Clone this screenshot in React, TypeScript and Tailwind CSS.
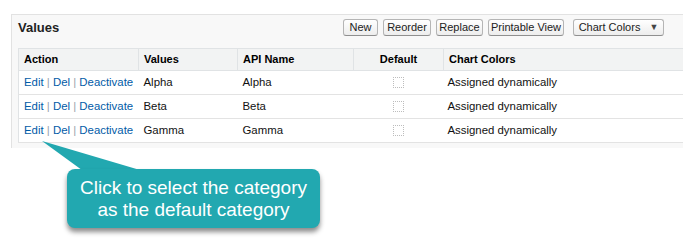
import React from 'react';

const rows = ['Alpha', 'Beta', 'Gamma'];

function Btn({ label, width, caret }: { label: string; width: string; caret?: boolean }) {
  return (
    <button
      type="button"
      className={`${width} h-[17px] flex items-center justify-center gap-[9px] whitespace-nowrap rounded-[3px] border border-[#b5b5b5] border-b-[#8f8f8f] bg-gradient-to-b from-white to-[#ededed] text-[11px] font-normal leading-none text-[#222]`}
    >
      <span>{label}</span>
      {caret && <span className="text-[9px] text-[#444]">▼</span>}
    </button>
  );
}

export default function App() {
  return (
    <div className="relative w-[700px] h-[247px] overflow-hidden bg-white font-['Liberation_Sans',Arial,sans-serif] text-black">
      <div className="pt-[14px] pl-[11px] pr-[17px]">
        <div className="border-l border-t border-[#e2e2e2] bg-[#f8f8f8] pl-[6px] pb-[5px]">
          <div className="flex items-start justify-between h-[33px] pt-[4px] pr-[19px]">
            <h3 className="text-[13px] leading-[18px] font-bold text-[#222]">Values</h3>
            <div className="flex gap-[5px]">
              <Btn label="New" width="w-[35px]" />
              <Btn label="Reorder" width="w-[48px]" />
              <Btn label="Replace" width="w-[47px]" />
              <Btn label="Printable View" width="w-[76px]" />
              <div className="ml-[4px]">
                <Btn label="Chart Colors" width="w-[91px]" caret />
              </div>
            </div>
          </div>

          <table className="w-full table-fixed border-collapse border border-r-0 border-[#e0e3e5] bg-white text-[11.4px]">
            <colgroup>
              <col className="w-[120px]" />
              <col className="w-[99px]" />
              <col className="w-[116px]" />
              <col className="w-[90px]" />
              <col />
            </colgroup>
            <thead>
              <tr className="h-[22px] bg-[#f2f3f3] border-b border-[#e0e3e5]">
                <th className="text-left font-bold pl-[5px] text-[11px]">Action</th>
                <th className="text-left font-bold pl-[5px] text-[11px] border-l border-[#e0e3e5]">Values</th>
                <th className="text-left font-bold pl-[5px] text-[11px] border-l border-[#e0e3e5]">API Name</th>
                <th className="text-center font-bold text-[11px] border-l border-[#e0e3e5]">Default</th>
                <th className="text-left font-bold pl-[5px] text-[11px] border-l border-[#e0e3e5]">Chart Colors</th>
              </tr>
            </thead>
            <tbody>
              {rows.map((name) => (
                <tr key={name} className="h-[24px] border-b border-[#e3e3e3]">
                  <td className="pl-[5px] whitespace-nowrap">
                    <a className="text-[#015ba7]">Edit</a>
                    <span className="text-[#9aa3ad]"> | </span>
                    <a className="text-[#015ba7]">Del</a>
                    <span className="text-[#9aa3ad]"> | </span>
                    <a className="text-[#015ba7]">Deactivate</a>
                  </td>
                  <td className="pl-[5px] text-[#111]">{name}</td>
                  <td className="pl-[5px] text-[#111]">{name}</td>
                  <td>
                    <div className="mx-auto w-[11px] h-[11px] border border-dotted border-[#bdbdbd]" />
                  </td>
                  <td className="pl-[4px] text-[#111]">Assigned dynamically</td>
                </tr>
              ))}
            </tbody>
          </table>
        </div>
      </div>

      <svg className="absolute left-0 top-0" width="700" height="247">
        <polygon points="42,141 86,173 150,173" fill="#22a8b0" />
      </svg>
      <div className="absolute left-[67px] top-[169px] w-[253px] h-[59px] rounded-[8px] bg-[#22a8b0] shadow-[0_4px_5px_rgba(0,0,0,0.45)] flex flex-col items-center justify-center text-white text-[19px] leading-[22px]">
        <div>Click to select the category</div>
        <div>as the default category</div>
      </div>
    </div>
  );
}
